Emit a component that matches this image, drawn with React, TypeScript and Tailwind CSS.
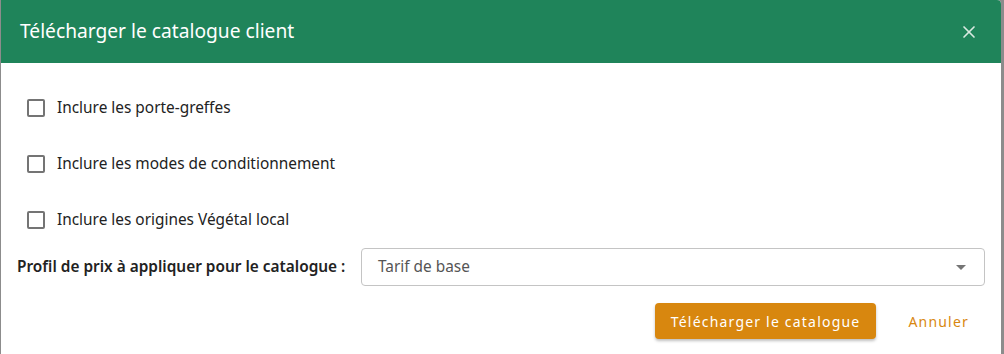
import { useState } from 'react'
import { X } from 'lucide-react'

const options = [
  'Inclure les porte-greffes',
  'Inclure les modes de conditionnement',
  'Inclure les origines Végétal local',
]

export default function App() {
  const [checked, setChecked] = useState<boolean[]>([false, false, false])

  return (
    <div
      className="flex h-[354px] w-[1004px] bg-[#8c8c8c] pl-px pr-[3px]"
      style={{ fontFamily: '"Noto Sans", "Open Sans", sans-serif' }}
    >
      <div className="flex flex-1 flex-col overflow-hidden rounded-tr-[4px] bg-white">
        <div className="flex h-[63px] shrink-0 items-center justify-between bg-[#1f845a] pl-[19px] pr-[22px]">
          <h2 className="text-[19.2px] text-white">Télécharger le catalogue client</h2>
          <X className="h-[20px] w-[20px] text-[#d9e9e1]" strokeWidth={2} />
        </div>

        <div className="flex flex-col pt-[17px]">
          {options.map((label, i) => (
            <label key={label} className="flex h-[56px] cursor-pointer items-center pl-[26px]">
              <input
                type="checkbox"
                checked={checked[i]}
                onChange={() => setChecked(checked.map((c, j) => (j === i ? !c : c)))}
                className="sr-only"
              />
              <span className="h-[18px] w-[18px] rounded-[2px] border-2 border-[#747474]" />
              <span className="ml-[12px] text-[15.4px] text-[#222]">{label}</span>
            </label>
          ))}
        </div>

        <div className="flex items-center pl-[16px] pr-[16px]">
          <span className="w-[344px] text-[15.4px] font-semibold text-[#222]">
            Profil de prix à appliquer pour le catalogue :
          </span>
          <div className="flex h-[38px] flex-1 items-center justify-between rounded-[4px] border border-[#c4c4c4] pl-[16px] pr-[18px]">
            <span className="text-[15.4px] text-[#555]">Tarif de base</span>
            <span className="h-0 w-0 border-x-[5px] border-t-[5px] border-x-transparent border-t-[#757575]" />
          </div>
        </div>

        <div className="mt-[17px] flex items-center justify-end pr-[32px]">
          <button className="h-[36px] rounded-[4px] bg-[#d8870f] px-[16px] text-[14px] tracking-[1.2px] text-white shadow-[0_2px_3px_rgba(0,0,0,0.25)]">
            Télécharger le catalogue
          </button>
          <button className="ml-[32px] text-[14px] tracking-[1.2px] text-[#d8870f]">Annuler</button>
        </div>
      </div>
    </div>
  )
}
